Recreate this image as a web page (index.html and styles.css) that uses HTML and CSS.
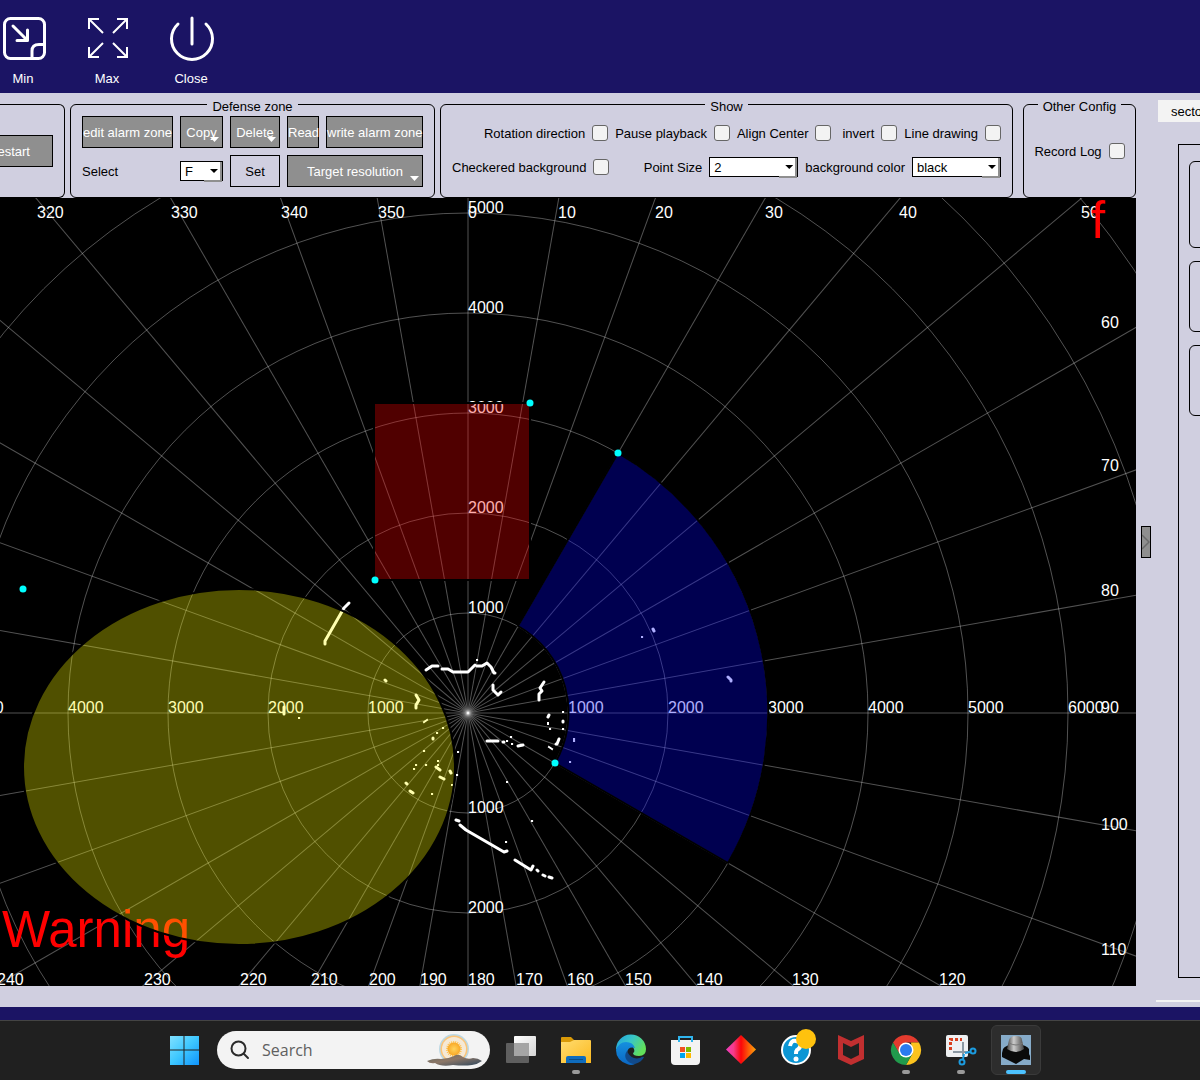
FILE: index.html
```html
<!DOCTYPE html>
<html lang="en">
<head>
<meta charset="utf-8">
<title>Radar view</title>
<link rel="stylesheet" href="styles.css">
</head>
<body>
<header class="topbar">
  <button class="tool" type="button">
    <svg viewBox="0 0 44 44" width="44" height="44" fill="none" stroke="#fff" stroke-width="3" stroke-linecap="round" stroke-linejoin="round">
      <rect x="3.500" y="2.500" width="40" height="40" rx="6"/>
      <path d="M12 10L26 24M26.500 14V24.500H16"/>
      <path d="M43 28.500H38Q31 28.500 31 35V42"/>
    </svg>
    <span>Min</span>
  </button>
  <button class="tool" type="button">
    <svg viewBox="0 0 44 44" width="44" height="44" fill="none" stroke="#fff" stroke-width="2">
      <path d="M4 13V3H14M4 3L18 17M32 3H42V13M42 3L28 17M4 31V41H14M4 41L18 27M32 41H42V31M42 41L28 27"/>
    </svg>
    <span>Max</span>
  </button>
  <button class="tool" type="button">
    <svg viewBox="0 0 44 44" width="44" height="44" fill="none" stroke="#fff" stroke-width="3" stroke-linecap="round">
      <path d="M23 2V28M9 8A20.500 20.500 0 1 0 37 8"/>
    </svg>
    <span>Close</span>
  </button>
</header>

<main class="workspace">
  <div class="main-col">
    <div class="toolbar">
      <fieldset class="group group-cut">
        <button class="btn restart" type="button">Restart</button>
      </fieldset>
      <fieldset class="group zone-group">
        <legend>Defense zone</legend>
        <div class="zone-grid">
          <button class="btn" type="button">edit alarm zone</button>
          <button class="btn menu" type="button">Copy</button>
          <button class="btn menu" type="button">Delete</button>
          <button class="btn" type="button">Read</button>
          <button class="btn" type="button">write alarm zone</button>
          <label for="zone">Select</label>
          <span class="drop"><select id="zone"><option>F</option></select></span>
          <button class="btn plain" type="button">Set</button>
          <button class="btn menu wide" type="button">Target resolution</button>
        </div>
      </fieldset>
      <fieldset class="group show-group">
        <legend>Show</legend>
        <div class="row">
          <label for="rot">Rotation direction</label><input type="checkbox" id="rot">
          <label for="pause">Pause playback</label><input type="checkbox" id="pause">
          <label for="align">Align Center</label><input type="checkbox" id="align">
          <label for="invert" class="spaced">invert</label><input type="checkbox" id="invert">
          <label for="line">Line drawing</label><input type="checkbox" id="line">
        </div>
        <div class="row">
          <label for="check">Checkered background</label><input type="checkbox" id="check">
          <label for="size" class="push">Point Size</label>
          <span class="drop drop-wide"><select id="size"><option>2</option></select></span>
          <label for="bg">background color</label>
          <span class="drop drop-wide"><select id="bg"><option>black</option></select></span>
        </div>
      </fieldset>
      <fieldset class="group other-group">
        <legend>Other Config</legend>
        <div class="row"><label for="log">Record Log</label><input type="checkbox" id="log"></div>
      </fieldset>
    </div>

    <svg class="radar" viewBox="0 198 1136 788" role="img" aria-label="Radar plot">
      <g class="grid">
        <circle cx="468" cy="713" r="100"/><circle cx="468" cy="713" r="200"/>
        <circle cx="468" cy="713" r="300"/><circle cx="468" cy="713" r="400"/>
        <circle cx="468" cy="713" r="500"/><circle cx="468" cy="713" r="600"/>
        <circle cx="468" cy="713" r="700"/><circle cx="468" cy="713" r="800"/>
        <path d="M-532 713H1468"/>
        <path d="M-532 713H1468" transform="rotate(10 468 713)"/>
        <path d="M-532 713H1468" transform="rotate(20 468 713)"/>
        <path d="M-532 713H1468" transform="rotate(30 468 713)"/>
        <path d="M-532 713H1468" transform="rotate(40 468 713)"/>
        <path d="M-532 713H1468" transform="rotate(50 468 713)"/>
        <path d="M-532 713H1468" transform="rotate(60 468 713)"/>
        <path d="M-532 713H1468" transform="rotate(70 468 713)"/>
        <path d="M-532 713H1468" transform="rotate(80 468 713)"/>
        <path d="M-532 713H1468" transform="rotate(90 468 713)"/>
        <path d="M-532 713H1468" transform="rotate(100 468 713)"/>
        <path d="M-532 713H1468" transform="rotate(110 468 713)"/>
        <path d="M-532 713H1468" transform="rotate(120 468 713)"/>
        <path d="M-532 713H1468" transform="rotate(130 468 713)"/>
        <path d="M-532 713H1468" transform="rotate(140 468 713)"/>
        <path d="M-532 713H1468" transform="rotate(150 468 713)"/>
        <path d="M-532 713H1468" transform="rotate(160 468 713)"/>
        <path d="M-532 713H1468" transform="rotate(170 468 713)"/>
      </g>
      <g class="ticks">
        <text x="37" y="218">320</text><text x="171" y="218">330</text><text x="281" y="218">340</text>
        <text x="378" y="218">350</text><text x="468" y="218">0</text><text x="558" y="218">10</text>
        <text x="655" y="218">20</text><text x="765" y="218">30</text><text x="899" y="218">40</text>
        <text x="1081" y="218">50</text><text x="1101" y="328">60</text><text x="1101" y="471">70</text>
        <text x="1101" y="596">80</text><text x="1101" y="713">90</text><text x="1101" y="830">100</text>
        <text x="1101" y="955">110</text>
        <text x="-3" y="985">240</text><text x="144" y="985">230</text><text x="240" y="985">220</text>
        <text x="311" y="985">210</text><text x="369" y="985">200</text><text x="420" y="985">190</text>
        <text x="468" y="985">180</text><text x="516" y="985">170</text><text x="567" y="985">160</text>
        <text x="625" y="985">150</text><text x="696" y="985">140</text><text x="792" y="985">130</text>
        <text x="939" y="985">120</text>
        <text x="468" y="213">5000</text><text x="468" y="313">4000</text><text x="468" y="413">3000</text>
        <text x="468" y="513">2000</text><text x="468" y="613">1000</text><text x="468" y="813">1000</text>
        <text x="468" y="913">2000</text>
        <text x="-32" y="713">5000</text><text x="68" y="713">4000</text><text x="168" y="713">3000</text>
        <text x="268" y="713">2000</text><text x="368" y="713">1000</text><text x="568" y="713">1000</text>
        <text x="668" y="713">2000</text><text x="768" y="713">3000</text><text x="868" y="713">4000</text>
        <text x="968" y="713">5000</text><text x="1068" y="713">6000</text>
      </g>
      <g class="echo">
        <path d="M426 670L432 666H438M442 669H448L453 672H468L475 665M477 666H482L487 663L491 667L494 673H495"/>
        <path d="M493 685V690L498 695L501 692"/>
        <path d="M544 682L540 688L542 691L539 694V700"/>
        <path d="M487 741H498M503 742H504M518 746L523 745"/>
        <path d="M349 603L344 608L325 641V644"/>
        <path d="M416 695L419 700L416 705V708"/>
        <path d="M456 820L459 821M460 825L466 830L504 852L507 851M515 860L531 870L533 866"/>
        <path d="M537 870L538 871M543 875L545 876M549 877L552 878M549 715L548 717M563 721V722M559 739L557 744H556M436 767L440 770M440 777L444 779M450 771L451 773M406 783L407 784M410 791L413 793M385 680L386 681M284 707V714M653 629L654 631M433 738V739M728 677L731 680V681"/>
      </g>
      <g class="echo thin">
        <path d="M549 747L552 749M424 722L427 720M548 723V724"/>
        <path d="M477 660h.1M507 741h.1M511 737h.1M512 744h.1M550 729h.1M563 712h.1M563 729h.1M574 739h.1M574 741h.1M570 762h.1M443 728h.1M437 733h.1M424 751h.1M458 752h.1M457 775h.1M452 785h.1M416 765h.1M414 769h.1M426 765h.1M438 761h.1M438 765h.1M432 794h.1M507 782h.1M532 821h.1M506 842h.1M299 718h.1M642 637h.1"/>
      </g>
      <g class="alert">
        <text x="2" y="947">Warning</text>
        <text x="1091" y="238">f</text>
      </g>
      <rect class="zone red" x="374" y="403" width="156" height="177"/>
      <ellipse class="zone yellow" cx="239" cy="767" rx="216" ry="178"/>
      <path class="zone blue" d="M618 453A300 300 0 0 1 728 863L555 763A100 100 0 0 0 518 626Z"/>
      <g class="handle">
        <circle cx="530" cy="403" r="3.500"/><circle cx="375" cy="580" r="3.500"/>
        <circle cx="618" cy="453" r="3.500"/><circle cx="555" cy="763" r="3.500"/>
        <circle cx="23" cy="589" r="3.500"/>
      </g>
    </svg>
  </div>

  <aside class="side">
    <button class="collapse" type="button" aria-label="Collapse panel">
      <svg viewBox="0 0 8 30" width="8" height="30" fill="none" stroke="#6a6a6a" stroke-width="1.500"><path d="M0 8L7 15L0 22"/></svg>
    </button>
    <div class="side-panel">
      <button class="tab" type="button">sector</button>
      <div class="pane">
        <div class="box box-tall"></div>
        <div class="box"></div>
        <div class="box"></div>
      </div>
    </div>
  </aside>
</main>

<nav class="taskbar">
  <button class="app start" type="button" aria-label="Start">
    <svg viewBox="0 0 30 30" width="30" height="30">
      <defs><linearGradient id="win" gradientUnits="userSpaceOnUse" x1="0" y1="0" x2="30" y2="30"><stop offset="0" stop-color="#85e2ff"/><stop offset=".5" stop-color="#3fc8ff"/><stop offset="1" stop-color="#0f93fb"/></linearGradient></defs>
      <path fill="url(#win)" d="M1 1H14.500V14.500H1ZM15.500 1H30V14.500H15.500ZM1 15.500H14.500V30H1ZM15.500 15.500H30V30H15.500Z"/>
    </svg>
  </button>
  <label class="search">
    <svg viewBox="0 0 20 20" width="20" height="20" fill="none" stroke="#2b2b2b" stroke-width="2" stroke-linecap="round"><circle cx="8.500" cy="8.500" r="7"/><path d="M14 14L18 18"/></svg>
    <input type="text" placeholder="Search" aria-label="Search">
    <svg class="sun" viewBox="0 0 56 34" width="56" height="34">
      <defs>
        <radialGradient id="sunfill"><stop offset="0" stop-color="#ffd35c"/><stop offset="1" stop-color="#f9a825"/></radialGradient>
        <linearGradient id="hill" x1="0" x2="1" y1="0" y2="1"><stop offset="0" stop-color="#5f665f"/><stop offset=".45" stop-color="#8d7767"/><stop offset="1" stop-color="#2c465e"/></linearGradient>
      </defs>
      <circle cx="28" cy="16" r="15" fill="#bcd8e4"/><circle cx="28" cy="16" r="13.500" fill="#fbc478"/><circle cx="28" cy="16" r="12" fill="#f5e9d6"/>
      <circle cx="28" cy="16" r="7" fill="none" stroke="#ffc34d" stroke-width="2" stroke-dasharray="1 1"/>
      <circle cx="28" cy="16" r="6.500" fill="url(#sunfill)"/>
      <path fill="url(#hill)" d="M1 28Q8 25 15 26Q22 26 28 23Q32 20 37 24Q42 27 47 25Q52 25 56 28Q52 31 46 32Q38 33 27 32Q15 34 9 30Q4 31 1 28Z"/>
    </svg>
  </label>
  <button class="app" type="button" aria-label="Task view">
    <svg viewBox="0 0 32 32" width="32" height="32">
      <defs><linearGradient id="tv" x1="0" y1="0" x2="1" y2="1"><stop offset="0" stop-color="#fff"/><stop offset="1" stop-color="#d4d4d4"/></linearGradient></defs>
      <rect x="9" y="2" width="22" height="20" rx="1" fill="url(#tv)"/><rect x="1" y="9" width="23" height="20" rx="1" fill="#666" fill-opacity=".9"/><path fill="#a5a5a5" d="M9 9H24V22H9Z"/>
    </svg>
  </button>
  <button class="app running" type="button" aria-label="Files">
    <svg viewBox="0 0 32 32" width="32" height="32">
      <defs><linearGradient id="fold" x1="0" y1="0" x2="1" y2="1"><stop offset="0" stop-color="#ffdc70"/><stop offset="1" stop-color="#fcb91f"/></linearGradient></defs>
      <path fill="#d99a08" d="M1 4Q1 3 2 3H11L14 6V10H1Z"/><path fill="url(#fold)" d="M1 8H10L14 6H30Q31 6 31 7V29H1Z"/><path fill="#0f6cbd" d="M6 29V24Q6 22 8 22H24Q26 22 26 24V29Z"/><path fill="#0b4c86" d="M9 25H23V26H9Z"/>
    </svg>
  </button>
  <button class="app" type="button" aria-label="Edge">
    <svg viewBox="0 0 32 32" width="32" height="32">
      <defs>
        <linearGradient id="e1" x1="0" y1="0" x2="1" y2=".5"><stop offset="0" stop-color="#1fa0e0"/><stop offset=".5" stop-color="#38c6c8"/><stop offset="1" stop-color="#62e05a"/></linearGradient>
        <linearGradient id="e2" x1="0" y1="0" x2="0" y2="1"><stop offset="0" stop-color="#1590df"/><stop offset="1" stop-color="#0b66c2"/></linearGradient>
      </defs>
      <path fill="url(#e1)" d="M1 16A15 15 0 0 1 31 15Q31 22 24 22Q18 22 18 19Q20 18 19 15Q17 10 11 10Q4 10 1 16Z"/>
      <path fill="url(#e2)" d="M1 16Q4 8 11 8Q18 8 20 14Q13 12 12 19Q12 27 20 30Q16 32 12 30Q1 26 1 16Z"/>
      <path fill="#114a8b" d="M12 17Q9 21 11 25Q14 30 20 30Q27 28 29 23Q28 22 25 24Q17 26 13 19Z"/>
    </svg>
  </button>
  <button class="app" type="button" aria-label="Store">
    <svg viewBox="0 0 32 32" width="32" height="32">
      <path fill="#f3f3f3" d="M1 6H30V27Q30 31 26 31H5Q1 31 1 27Z"/><path fill="none" stroke="#2fb5ee" stroke-width="2" d="M9 8V3H22V8"/>
      <path fill="#f25022" d="M10 13H15V18H10Z"/><path fill="#7fba00" d="M16 13H21V18H16Z"/><path fill="#00a4ef" d="M10 19H15V24H10Z"/><path fill="#ffb900" d="M16 19H21V24H16Z"/>
    </svg>
  </button>
  <button class="app" type="button" aria-label="Diamond">
    <svg viewBox="0 0 32 32" width="32" height="32">
      <defs><linearGradient id="dia"><stop offset="0" stop-color="#f03cc0"/><stop offset=".25" stop-color="#f53b8a"/><stop offset=".5" stop-color="#fb0509"/><stop offset=".75" stop-color="#fb5a08"/><stop offset="1" stop-color="#fba40a"/></linearGradient></defs>
      <path fill="url(#dia)" d="M16 1L31 15.500L16 30L1 15.500Z"/>
    </svg>
  </button>
  <button class="app" type="button" aria-label="Help">
    <svg viewBox="0 0 32 32" width="32" height="32">
      <circle cx="16" cy="16" r="14" fill="#0c96d4" stroke="#fff" stroke-width="2"/>
      <path fill="none" stroke="#fff" stroke-width="4" d="M10 12Q11 6 16 7Q22 8 20 13Q19 15 17 16Q16 17 16 20"/><circle cx="16" cy="25" r="2.500" fill="#fff"/>
    </svg>
    <i class="badge"></i>
  </button>
  <button class="app" type="button" aria-label="Security">
    <svg viewBox="0 0 32 32" width="32" height="32"><path fill="#c12f30" d="M3 1L16 7L29 1V25L16 31L3 25ZM8 9V21L16 25L24 21V9L16 13Z" fill-rule="evenodd"/></svg>
  </button>
  <button class="app running" type="button" aria-label="Chrome">
    <svg viewBox="0 0 32 32" width="32" height="32">
      <path fill="#e33b2e" d="M3 8.500A15 15 0 0 1 29 8.500H16L9 19.500Z"/>
      <path fill="#fcc31e" d="M29 8.500A15 15 0 0 1 16 31L22.500 19.500L21 8.500Z"/>
      <path fill="#219a4c" d="M3 8.500A15 15 0 0 0 16 31L22.500 19.500L9.500 19.500Z"/>
      <circle cx="16" cy="16" r="7.500" fill="#fff"/><circle cx="16" cy="16" r="6" fill="#2a7af0"/>
    </svg>
  </button>
  <button class="app running" type="button" aria-label="Snip">
    <svg viewBox="0 0 32 32" width="32" height="32">
      <rect x="1" y="1" width="22" height="22" rx="2" fill="#eef0f2"/><path fill="none" stroke="#d8401f" stroke-width="3" stroke-dasharray="3 2" d="M5.500 16V5.500H17"/>
      <path stroke="#8b98a3" stroke-width="2" fill="none" d="M18 8V22M8 18H24"/>
      <path fill="none" stroke="#1c9ce0" stroke-width="2" d="M18 25L19 20M20 19L25 18"/><circle cx="17" cy="28" r="2.500" fill="none" stroke="#1c9ce0" stroke-width="2"/><circle cx="28" cy="17" r="2.500" fill="none" stroke="#1c9ce0" stroke-width="2"/>
    </svg>
  </button>
  <button class="app running active" type="button" aria-label="Radar">
    <svg viewBox="0 0 32 32" width="32" height="32">
      <defs><linearGradient id="dome"><stop offset="0" stop-color="#444"/><stop offset=".4" stop-color="#ccc"/><stop offset="1" stop-color="#444"/></linearGradient></defs>
      <path fill="#86abc9" d="M1 1H31V31H1Z"/><path fill="#0a0a0a" d="M3 15Q5 11 16 10Q27 11 29 15V20L30 22V26L24 25L16 30L2 23V19Z"/>
      <path fill="url(#dome)" d="M9 6Q10 2 16 2Q22 2 22 6L24 15Q16 21 7 15Z"/><path fill="none" stroke="#777" d="M9 9Q16 13 23 9"/>
    </svg>
  </button>
</nav>
</body>
</html>
```
FILE: styles.css
```css
* { box-sizing: border-box; }
body {
  margin: 0;
  min-height: 100vh;
  display: flex;
  flex-direction: column;
  overflow-x: hidden;
  background: #1b1464;
  color: #000;
  font: 13px/16px "Liberation Sans", Arial, sans-serif;
}
button, select, input { font: inherit; color: inherit; margin: 0; }
button { padding: 0; border: 0; background: none; }

/* Window controls */
.topbar { display: flex; gap: 38px; height: 93px; padding-top: 16px; color: #fff; }
.tool { width: 46px; display: flex; flex-direction: column; align-items: center; justify-content: flex-start; gap: 11px; }
.tool svg { flex: none; overflow: visible; }

/* Work area */
.workspace { display: flex; background: #d0cfe0; }
.main-col { flex: 1; min-width: 0; padding-bottom: 21px; }
.toolbar { display: flex; height: 105px; padding-top: 4px; }
.group {
  min-width: 0;
  margin: 0 5px 0 0;
  padding: 4px 11px 0;
  border: 1px solid #000;
  border-radius: 6px;
}
.group legend { margin: 0 auto; padding: 0 5px; height: 15px; line-height: 20px; }
.group-cut {
  flex: none;
  width: 65px;
  margin-top: 7px;
  padding: 30px 11px 0 0;
  border-left: 0;
  border-radius: 0 6px 6px 0;
  display: flex;
  justify-content: flex-end;
  overflow: hidden;
}
.zone-group { flex: none; }
.show-group { flex: 1; margin-right: 10px; }
.other-group { flex: none; width: 113px; margin-right: 0; padding-left: 10px; padding-right: 10px; }

.btn {
  position: relative;
  height: 32px;
  padding-top: 2px;
  border: 1px solid #000;
  background: #8f8f8f;
  color: #fff;
  white-space: nowrap;
}
.btn.plain { background: none; color: #000; }
.restart { flex: none; width: 88px; }
.menu::after {
  content: "";
  position: absolute;
  right: 3px;
  bottom: 5px;
  width: 9px;
  height: 5px;
  background: #fff;
  clip-path: polygon(0 0, 100% 0, 50% 100%);
}
.zone-grid {
  display: grid;
  grid-template-columns: 91px 43px 50px 32px 97px;
  grid-auto-rows: 32px;
  gap: 7px;
  align-items: center;
}
.wide { grid-column: span 2; }
.toolbar label { padding-top: 2px; }

.row { display: flex; align-items: center; justify-content: flex-end; gap: 7px; height: 34px; white-space: nowrap; }
.spaced { margin-left: 4px; }
.push { margin-left: auto; }
.other-group .row { height: 70px; justify-content: center; }

input[type="checkbox"] {
  appearance: none;
  width: 16px;
  height: 16px;
  border: 1px solid #666;
  border-radius: 3px;
  background: #f3f3f3;
}
.drop { position: relative; display: block; height: 20px; }
.drop-wide { width: 89px; }
.drop select {
  appearance: none;
  display: block;
  width: 100%;
  height: 20px;
  padding: 1px 0 0 4px;
  border: 1px solid #000;
  border-radius: 0;
  background: #fff;
}
.drop::before {
  content: "";
  position: absolute;
  right: 1px;
  top: 1px;
  width: 16px;
  height: 18px;
  border: solid #8f8f8f;
  border-width: 0 2px 2px 0;
  pointer-events: none;
}
.drop::after {
  content: "";
  position: absolute;
  right: 5px;
  top: 8px;
  width: 8px;
  height: 4px;
  background: #000;
  clip-path: polygon(0 0, 100% 0, 50% 100%);
  pointer-events: none;
}

/* Radar plot */
.radar { display: block; width: 100%; background: #000; }
.grid { fill: none; stroke: #fff; stroke-opacity: .32; stroke-width: 1; }
.ticks { fill: #fff; font-size: 16px; }
.echo { fill: none; stroke: #fff; stroke-width: 3; stroke-linecap: round; stroke-linejoin: round; }
.echo.thin { stroke-width: 2; stroke-linecap: square; }
.alert { fill: #f00; font-size: 51px; }
.zone { fill-opacity: .314; stroke: #000; stroke-width: 2; }
.red { fill: #f00; }
.yellow { fill: #ff0; }
.blue { fill: #00f; }
.handle { fill: #0ff; }

/* Side panel, running off the right edge */
.side { flex: none; width: 64px; display: flex; overflow: hidden; }
.collapse {
  flex: none;
  align-self: center;
  width: 10px;
  height: 32px;
  margin: 0 5px;
  margin-bottom: 16px;
  border: 1px solid #000;
  background: #8f8f8f;
}
.collapse svg { display: block; }
.side-panel { flex: none; width: 240px; display: flex; flex-direction: column; padding-top: 7px; }
.tab {
  align-self: flex-start;
  margin-left: 2px;
  height: 22px;
  padding: 2px 13px 0;
  background: #f3f3f3;
}
.pane {
  flex: 1;
  margin: 22px 0 22px 22px;
  padding: 16px 10px;
  border: 1px solid #000;
  display: flex;
  flex-direction: column;
  gap: 13px;
}
.side-panel::after { content: ""; height: 2px; margin-bottom: 5px; background: #f3f3f3; }
.box { height: 71px; border: 1px solid #000; border-radius: 6px; }
.box-tall { height: 87px; }

/* Taskbar */
.taskbar {
  display: flex;
  align-items: center;
  justify-content: center;
  gap: 5px;
  height: 60px;
  margin-top: 13px;
  padding-bottom: 2px;
  border-top: 1px solid #444;
  background: #202020;
}
.app {
  position: relative;
  flex: none;
  width: 50px;
  height: 50px;
  border: 1px solid transparent;
  border-radius: 6px;
  display: flex;
  align-items: center;
  justify-content: center;
}
.start { margin-right: 3px; }
.search {
  flex: none;
  width: 273px;
  height: 38px;
  margin-right: 1px;
  padding: 0 8px 0 13px;
  border-radius: 19px;
  background: #f3f3f3;
  display: flex;
  align-items: center;
}
.search input {
  flex: 1;
  min-width: 0;
  margin-left: 12px;
  padding: 0;
  border: 0;
  background: none;
  font: 16px/24px "Open Sans", "Noto Sans", sans-serif;
}
.search input::placeholder { color: #5f5f5f; opacity: 1; }
.running::after {
  content: "";
  position: absolute;
  left: 50%;
  bottom: 0;
  width: 8px;
  height: 4px;
  margin-left: -4px;
  border-radius: 2px;
  background: #9a9a9a;
}
.active { border-color: #3a3a3a; background: #2d2d2d; }
.active::after { width: 20px; margin-left: -10px; background: #4cc2ff; }
.badge { position: absolute; right: 4px; top: 3px; width: 20px; height: 20px; border-radius: 50%; background: #ffc20e; }
```
